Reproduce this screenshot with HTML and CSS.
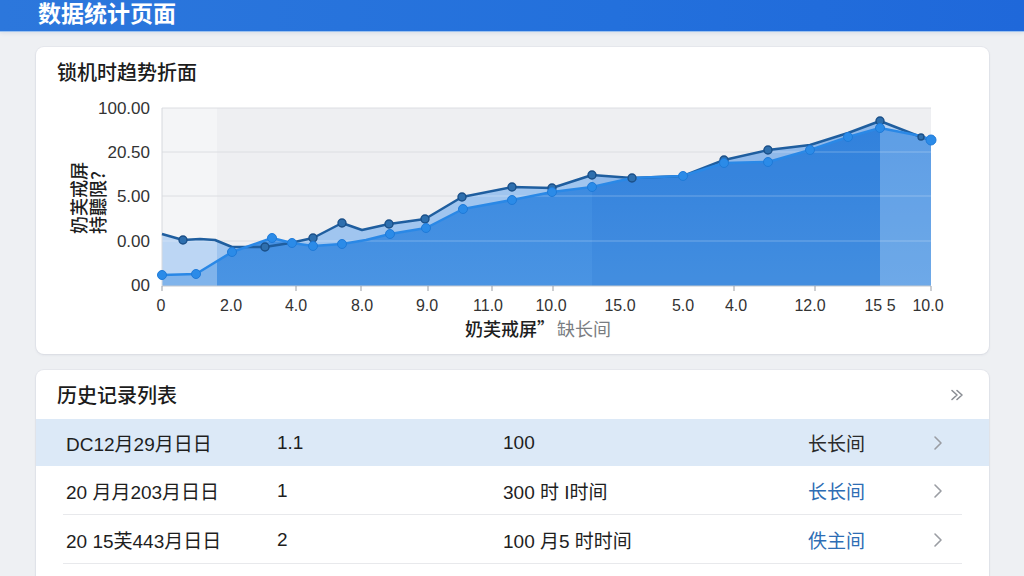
FILE: index.html
```html
<!DOCTYPE html>
<html lang="zh-CN">
<head>
<meta charset="utf-8">
<title>数据统计页面</title>
<link rel="stylesheet" href="styles.css">
</head>
<body>
<header class="topbar"><h1>数据统计页面</h1></header>
<main class="content">
  <section class="card chart-card">
    <h2 class="card-title">锁机时趋势折面</h2>
    <svg class="chart" viewBox="36 84 953 262" width="953" height="262" xmlns="http://www.w3.org/2000/svg">
      <defs>
        <linearGradient id="gB" x1="0" y1="0" x2="0" y2="1">
          <stop offset="0" stop-color="#3686df"/>
          <stop offset="1" stop-color="#4a94e3"/>
        </linearGradient>
        <clipPath id="areaClip">
          <polygon points="162,234 183,240 200,239 215,240 232,247 250,247 265,247 290,243 313,238 342,223 362,230 389,224 425,219 462,197 512,187 552,188 592,175 632,178 683,176 724,160 768,150 810,145 848,133 880,121 921,137 931,140 931,286 162,286"/>
          <polygon points="162,275 196,274 232,252 272,238 292,243 313,246 342,244 366,240 390,234 426,228 463,209 512,200 552,192 592,187 632,178 683,176 724,163 768,162 810,150 848,137 880,128 921,136 931,140 931,286 162,286"/>
        </clipPath>
      </defs>
      <rect class="plot-bg" x="162" y="108" width="769" height="178"/>
      <rect class="plot-bg-light" x="162" y="108" width="55" height="178"/>
      <g class="grid">
        <line x1="162" y1="108" x2="931" y2="108"/>
        <line x1="162" y1="152" x2="931" y2="152"/>
        <line x1="162" y1="196" x2="931" y2="196"/>
        <line x1="162" y1="241" x2="931" y2="241"/>
      </g>
      <polygon class="area-a" points="162,234 183,240 200,239 215,240 232,247 250,247 265,247 290,243 313,238 342,223 362,230 389,224 425,219 462,197 512,187 552,188 592,175 632,178 683,176 724,160 768,150 810,145 848,133 880,121 921,137 931,140 931,286 162,286"/>
      <polygon class="area-b" points="162,275 196,274 232,252 272,238 292,243 313,246 342,244 366,240 390,234 426,228 463,209 512,200 552,192 592,187 632,178 683,176 724,163 768,162 810,150 848,137 880,128 921,136 931,140 931,286 162,286"/>
      <g clip-path="url(#areaClip)">
        <rect class="band-light" x="162" y="100" width="55" height="190"/>
        <rect class="band-dark" x="592" y="100" width="288" height="190"/>
        <rect class="band-end" x="880" y="100" width="51" height="190"/>
        <g class="grid-over">
          <line x1="162" y1="152" x2="931" y2="152"/>
          <line x1="162" y1="196" x2="931" y2="196"/>
          <line x1="162" y1="241" x2="931" y2="241"/>
        </g>
      </g>
      <line class="axis" x1="162" y1="286" x2="931" y2="286"/>
      <line class="axis-y" x1="162" y1="108" x2="162" y2="286"/>
      <g class="ticks">
        <line x1="162" y1="286" x2="162" y2="291"/>
        <line x1="296" y1="286" x2="296" y2="291"/>
        <line x1="361" y1="286" x2="361" y2="291"/>
        <line x1="428" y1="286" x2="428" y2="291"/>
        <line x1="492" y1="286" x2="492" y2="291"/>
        <line x1="553" y1="286" x2="553" y2="291"/>
        <line x1="734" y1="286" x2="734" y2="291"/>
        <line x1="815" y1="286" x2="815" y2="291"/>
        <line x1="931" y1="286" x2="931" y2="291"/>
      </g>
      <polyline class="line-a" points="162,234 183,240 200,239 215,240 232,247 250,247 265,247 290,243 313,238 342,223 362,230 389,224 425,219 462,197 512,187 552,188 592,175 632,178 683,176 724,160 768,150 810,145 848,133 880,121 921,137 931,140"/>
      <polyline class="line-b" points="162,275 196,274 232,252 272,238 292,243 313,246 342,244 366,240 390,234 426,228 463,209 512,200 552,192 592,187 632,178 683,176 724,163 768,162 810,150 848,137 880,128 921,136 931,140"/>
      <g class="dots-a">
        <circle cx="183" cy="240" r="4"/><circle cx="265" cy="247" r="4"/><circle cx="313" cy="238" r="4"/>
        <circle cx="342" cy="223" r="4"/><circle cx="389" cy="224" r="4"/><circle cx="425" cy="219" r="4"/>
        <circle cx="462" cy="197" r="4"/><circle cx="512" cy="187" r="4"/><circle cx="552" cy="188" r="4"/>
        <circle cx="592" cy="175" r="4"/><circle cx="632" cy="178" r="4"/><circle cx="724" cy="160" r="4"/>
        <circle cx="768" cy="150" r="4"/><circle cx="880" cy="121" r="4"/><circle cx="921" cy="137" r="3"/>
      </g>
      <g class="dots-b">
        <circle cx="162" cy="275" r="4.5"/><circle cx="196" cy="274" r="4.5"/><circle cx="232" cy="252" r="4.5"/>
        <circle cx="272" cy="238" r="4.5"/><circle cx="292" cy="243" r="4.5"/><circle cx="313" cy="246" r="4.5"/>
        <circle cx="342" cy="244" r="4.5"/><circle cx="390" cy="234" r="4.5"/><circle cx="426" cy="228" r="4.5"/>
        <circle cx="463" cy="209" r="4.5"/><circle cx="512" cy="200" r="4.5"/><circle cx="552" cy="192" r="4.5"/>
        <circle cx="592" cy="187" r="4.5"/><circle cx="683" cy="176" r="4.5"/><circle cx="724" cy="163" r="4.5"/>
        <circle cx="768" cy="162" r="4.5"/><circle cx="810" cy="150" r="4.5"/><circle cx="848" cy="137" r="4.5"/>
        <circle cx="880" cy="128" r="4.5"/><circle cx="931" cy="140" r="5"/>
      </g>
      <g class="ylabels">
        <text x="150" y="114">100.00</text>
        <text x="150" y="158">20.50</text>
        <text x="150" y="202">5.00</text>
        <text x="150" y="247">0.00</text>
        <text x="150" y="291">00</text>
      </g>
      <g class="xlabels">
        <text x="161" y="311">0</text>
        <text x="231" y="311">2.0</text>
        <text x="296" y="311">4.0</text>
        <text x="362" y="311">8.0</text>
        <text x="427" y="311">9.0</text>
        <text x="488" y="311">11.0</text>
        <text x="551" y="311">10.0</text>
        <text x="620" y="311">15.0</text>
        <text x="683" y="311">5.0</text>
        <text x="736" y="311">4.0</text>
        <text x="810" y="311">12.0</text>
        <text x="880" y="311">15 5</text>
        <text x="928" y="311">10.0</text>
      </g>
      <text class="xtitle" x="465" y="336">奶芙戒屏”<tspan class="xtitle-muted" dx="2">缺长间</tspan></text>
      <text class="ytitle" transform="translate(86 234) rotate(-90)">奶芙戒屏</text>
      <text class="ytitle" transform="translate(105 234) rotate(-90)">持聽限?</text>
    </svg>
  </section>

  <section class="card list-card">
    <div class="list-head">
      <h2 class="card-title">历史记录列表</h2>
      <svg class="more" width="14" height="14" viewBox="0 0 14 14"><path d="M2 2.5 L7 7 L2 11.5 M7 2.5 L12 7 L7 11.5"/></svg>
    </div>
    <ul class="rows">
      <li class="row active">
        <span>DC12月29月日日</span><span>1.1</span><span>100</span><span class="tag tag-plain">长长间</span>
        <svg class="chev" width="12" height="16" viewBox="0 0 12 16"><path d="M3 2 L9 8 L3 14"/></svg>
      </li>
      <li class="row">
        <span>20 月月203月日日</span><span>1</span><span>300 时 I时间</span><span class="tag">长长间</span>
        <svg class="chev" width="12" height="16" viewBox="0 0 12 16"><path d="M3 2 L9 8 L3 14"/></svg>
      </li>
      <li class="row">
        <span>20 15芙443月日日</span><span>2</span><span>100 月5 时时间</span><span class="tag">佚主间</span>
        <svg class="chev" width="12" height="16" viewBox="0 0 12 16"><path d="M3 2 L9 8 L3 14"/></svg>
      </li>
    </ul>
  </section>
</main>
</body>
</html>
```

FILE: styles.css
```css
html, body {
  margin: 0;
  padding: 0;
}
body {
  width: 1024px;
  height: 576px;
  overflow: hidden;
  background: #eef0f3;
  font-family: "Liberation Sans", "Noto Sans CJK SC", sans-serif;
  color: #222;
}
.topbar {
  height: 31px;
  box-sizing: border-box;
  padding-left: 38px;
  background: linear-gradient(90deg, #2c77dc 0%, #2370dc 60%, #1f68da 100%);
  box-shadow: 0 1px 0 #9cc2ef, 0 2px 4px rgba(20, 60, 120, 0.10);
}
.topbar h1 {
  margin: 0;
  font-family: "Noto Sans CJK SC", sans-serif;
  font-weight: 700;
  font-size: 23px;
  line-height: 24px;
  color: #fff;
}
.content {
  display: flex;
  flex-direction: column;
  gap: 16px;
  padding: 16px 35px 0 36px;
}
.card {
  background: #fff;
  border-radius: 8px;
  box-shadow: 0 1px 3px rgba(20, 40, 80, 0.08), 0 0 0 1px rgba(20, 40, 80, 0.03);
}
.chart-card {
  height: 307px;
  box-sizing: border-box;
  padding-top: 13px;
}
.card-title {
  margin: 0 0 0 21px;
  font-family: "Noto Sans CJK SC", sans-serif;
  font-weight: 500;
  font-size: 20px;
  line-height: 24px;
  color: #1c1c1c;
}
.chart {
  display: block;
}
.plot-bg { fill: #eeeff2; }
.plot-bg-light { fill: #f4f5f7; }
.grid line { stroke: #dcdee2; stroke-width: 1; }
.grid-over line { stroke: rgba(255, 255, 255, 0.28); stroke-width: 1.2; }
.area-a { fill: #a0c5ef; }
.area-b { fill: url(#gB); }
.band-light { fill: rgba(255, 255, 255, 0.30); }
.band-dark { fill: rgba(10, 90, 200, 0.10); }
.band-end { fill: rgba(255, 255, 255, 0.20); }
.axis { stroke: #c4c8ce; stroke-width: 1; }
.axis-y { stroke: #d6d9de; stroke-width: 1; }
.ticks line { stroke: #9a9ea5; stroke-width: 1; }
.line-a { fill: none; stroke: #1f5e9f; stroke-width: 2.5; stroke-linejoin: round; }
.line-b { fill: none; stroke: #2a88e6; stroke-width: 2.5; stroke-linejoin: round; }
.dots-a circle { fill: #2e6fae; stroke: #1b5089; stroke-width: 1.4; }
.dots-b circle { fill: #2b8be8; stroke: #1f7ad8; stroke-width: 1; }
.ylabels text {
  font-family: "Liberation Sans", sans-serif;
  font-size: 17px;
  fill: #333;
  text-anchor: end;
}
.xlabels text {
  font-family: "Liberation Sans", sans-serif;
  font-size: 16px;
  fill: #333;
  text-anchor: middle;
}
.xtitle {
  font-family: "Noto Sans CJK SC", sans-serif;
  font-size: 18px;
  font-weight: 500;
  fill: #1e1e1e;
}
.xtitle-muted {
  font-weight: 400;
  fill: #7a7d82;
}
.ytitle {
  font-family: "Noto Sans CJK SC", sans-serif;
  font-size: 18px;
  font-weight: 500;
  fill: #1e1e1e;
}
.list-card {
  height: 230px;
}
.list-head {
  height: 49px;
  display: flex;
  align-items: center;
  justify-content: space-between;
  padding-right: 25px;
}
.more path {
  fill: none;
  stroke: #8a8e94;
  stroke-width: 1.6;
  stroke-linecap: round;
  stroke-linejoin: round;
}
.rows {
  list-style: none;
  margin: 0;
  padding: 0;
}
.row {
  position: relative;
  display: grid;
  grid-template-columns: 211px 226px 305px 1fr 12px;
  align-items: center;
  height: 49px;
  padding: 0 45px 0 30px;
  font-size: 19px;
  color: #1e1e1e;
}
.row::after {
  content: "";
  position: absolute;
  left: 27px;
  right: 27px;
  bottom: 0;
  height: 1px;
  background: #e8e9ec;
}
.row.active {
  height: 47px;
  background: #dce9f7;
}
.row.active::after {
  display: none;
}
.tag {
  color: #2e6db4;
}
.tag-plain {
  color: #2a2a2a;
}
.chev path {
  fill: none;
  stroke: #9a9da3;
  stroke-width: 1.6;
  stroke-linecap: round;
  stroke-linejoin: round;
}
```
